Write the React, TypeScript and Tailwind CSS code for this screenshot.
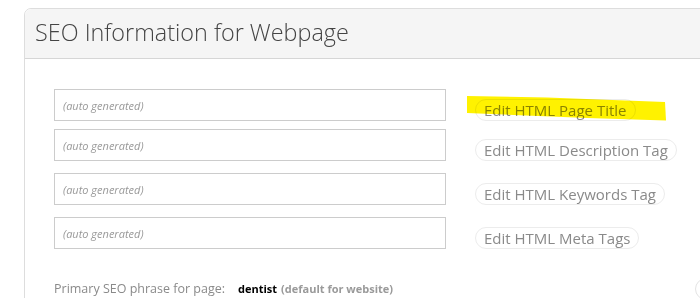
import React from 'react';

const fields = [
  { label: 'Edit HTML Page Title', mt: 'mt-0', highlight: true },
  { label: 'Edit HTML Description Tag', mt: 'mt-[8px]', highlight: false },
  { label: 'Edit HTML Keywords Tag', mt: 'mt-[12px]', highlight: false },
  { label: 'Edit HTML Meta Tags', mt: 'mt-[12px]', highlight: false },
];

const App: React.FC = () => {
  return (
    <div
      className="w-[700px] h-[298px] overflow-hidden bg-white pl-[24px] pt-[8px]"
      style={{ fontFamily: '"Open Sans", "Liberation Sans", sans-serif' }}
    >
      <div className="w-[770px] h-[320px] border border-[#dddddd] rounded-tl-[7px] bg-white">
        <div className="h-[50px] bg-[#f5f5f5] border-b border-[#d6d6d6] rounded-tl-[7px] pl-[10px] pt-[8px]">
          <h1 className="text-[23.4px] leading-[30px] font-light text-[#444444]">SEO Information for Webpage</h1>
        </div>

        <div className="px-[29px] pt-[30px]">
          {fields.map((f) => (
            <div key={f.label} className={`${f.mt} flex items-end`}>
              <input
                type="text"
                placeholder="(auto generated)"
                className="w-[392px] h-[32px] border border-[#cccccc] bg-white px-[8px] text-[11px] text-[#555] placeholder:italic placeholder:text-[#999999] outline-none"
              />
              <div className="relative ml-[29px] mb-[-1px]">
                <button
                  type="button"
                  className="h-[22px] rounded-full border border-[#ececec] px-[8px] text-[15px] leading-[20px] text-[#8a8a8a] bg-white"
                >
                  {f.label}
                </button>
                {f.highlight && (
                  <svg
                    className="absolute left-[-8px] top-[-2px] mix-blend-multiply pointer-events-none"
                    width="200"
                    height="27"
                    viewBox="0 0 200 27"
                  >
                    <path d="M0 0 L80 1.5 L198 6 L199 24.5 L120 22 L0 17 Z" fill="#fff200" />
                  </svg>
                )}
              </div>
            </div>
          ))}

          <div className="mt-[29px] flex items-center">
            <span className="w-[184px] text-[12.5px] text-[#8a8a8a]">Primary SEO phrase for page:</span>
            <span className="text-[11px] font-bold text-black">dentist</span>
            <span className="ml-[4px] text-[11px] font-bold text-[#9a9a9a]">(default for website)</span>
            <span className="ml-auto w-[69px] h-[22px] rounded-full border border-[#e4e4e4]" />
          </div>
        </div>
      </div>
    </div>
  );
};

export default App;
